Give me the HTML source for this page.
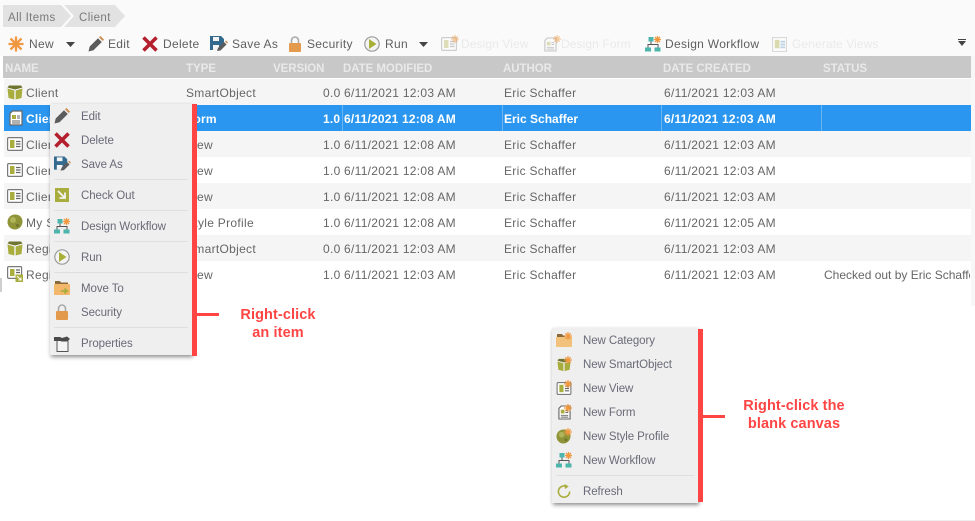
<!DOCTYPE html>
<html><head><meta charset="utf-8">
<style>
html,body{margin:0;padding:0}
body{width:975px;height:521px;overflow:hidden;position:relative;background:#fff;font-family:"Liberation Sans",sans-serif;font-size:12px;color:#666;letter-spacing:.3px}
.a{position:absolute}
.t{position:absolute;white-space:nowrap;line-height:16px;height:16px}
.tb{color:#5f5f5f;font-size:12px;margin-top:-1px}
.dis{color:#eaeaea;letter-spacing:.1px}
.h{color:#e9e9e9;font-weight:bold;font-size:11.5px;letter-spacing:-.05px;top:61px}
.row{position:absolute;left:4px;width:967px;height:26px}
.m{position:absolute;background:#efefef;box-shadow:1px 2px 4px rgba(0,0,0,.45)}
.mi{position:absolute;white-space:nowrap;line-height:16px;height:16px;color:#6a6a78;font-size:11.5px;letter-spacing:-.08px;margin-top:1px}
.ms{position:absolute;height:1px;background:#dfdfdf}
.red{position:absolute;background:#ff4444}
.lab{position:absolute;color:#ff4444;font-weight:bold;font-size:14.5px;letter-spacing:.1px;text-align:center;white-space:nowrap;line-height:18px}
.sel{color:#fff;font-weight:bold;letter-spacing:.2px}
svg.i{position:absolute;overflow:visible}
</style></head><body>
<svg width="0" height="0" style="position:absolute">
<defs>
<symbol id="star" viewBox="0 0 16 16"><path d="M8 .5v15M.5 8h15M2.500 2.500l11 11M13.500 2.500l-11 11" stroke="#f0973f" stroke-width="2.300" fill="none"/></symbol>
<symbol id="pen" viewBox="0 0 16 16"><path d="M.5 15.500l1.200-5L10 2.200l3.800 3.800-8.300 8.300z" fill="#5c5c5c"/><path d="M11 1.200l3.800 3.800 1.200-1.400L12.400 0z" fill="#c98a4a"/></symbol>
<symbol id="x" viewBox="0 0 16 16"><path d="M1.500 1.500l13 13M14.500 1.500l-13 13" stroke="#b5202e" stroke-width="3.600" fill="none"/></symbol>
<symbol id="save" viewBox="0 0 18 16"><path d="M0 0h11l3 3v5l-6 6H0z" fill="#356a8f"/><rect x="3" y="1" width="6" height="4" fill="#f4f4f4"/><rect x="3" y="9" width="6" height="5" fill="#f4f4f4"/><path d="M7 15l1-3 6-6 2.500 2.500-6 6z" fill="#5c5c5c"/><path d="M15 5.500l2 2 1-1-2-2z" fill="#c98a4a"/></symbol>
<symbol id="lock" viewBox="0 0 14 16"><path d="M3.500 7V4.500a3.500 3.500 0 017 0V7" stroke="#a9a9a9" stroke-width="1.600" fill="none"/><rect x="1" y="7" width="12" height="9" rx="1" fill="#e39a4c"/></symbol>
<symbol id="run" viewBox="0 0 16 16"><circle cx="8" cy="8" r="7.200" fill="#f4f4f4" stroke="#9b9b9b" stroke-width="1.200"/><path d="M5 3L12.500 8 5 13z" fill="#a9b03a"/></symbol>
<symbol id="flow" viewBox="0 0 16 16"><rect x="3.500" y="1" width="5" height="4.500" fill="#4db6ac"/><rect x="0" y="11.500" width="6" height="4" fill="#4db6ac"/><rect x="9.500" y="11.500" width="6" height="4" fill="#4db6ac"/><path d="M3 11.500V8.500h10v3M6 5.500v3" stroke="#555" stroke-width="1" fill="none"/><path d="M12.500 0v7M9 3.500h7M10 1l5 5M15 1l-5 5" stroke="#f0973f" stroke-width="1.300"/></symbol>
<symbol id="cube" viewBox="0 0 16 16"><path d="M2 1.500h12l1.500 2L8 5.500.5 3.500z" fill="#6f7430"/><path d="M.5 4.500l6.800 2V15.500L1.500 14z" fill="#a9ad3e"/><path d="M15.500 4.500l-6.800 2V15.500l5.800-1.500z" fill="#a9ad3e"/></symbol>
<symbol id="view" viewBox="0 0 16 14"><rect x=".6" y=".6" width="14.800" height="12.800" rx="1" fill="#fff" stroke="#7a7a7a" stroke-width="1.200"/><rect x="3" y="3" width="4.500" height="8" fill="#a9ad3e"/><path d="M9 4.500h4.500M9 7h4.500M9 9.500h4.500" stroke="#666" stroke-width="1.300"/></symbol>
<symbol id="form" viewBox="0 0 14 16"><path d="M3.500 1h9.500V15H1V3.500z" fill="#fff" stroke="#666" stroke-width="1.200"/><rect x="3" y="5" width="4" height="4" fill="#a9ad3e"/><path d="M8 6h3M8 8h3M3 11h8M3 13h8" stroke="#666" stroke-width="1"/></symbol>
<symbol id="ball" viewBox="0 0 16 16"><path d="M8 .5c4.500 0 7.500 3 7.500 7 0 4.500-3.500 8-7.500 8-4.500 0-7.500-3.500-7.500-7.500S3.500.5 8 .5z" fill="#8f9438"/><circle cx="6" cy="6" r="3" fill="#b0b45a"/><circle cx="10.500" cy="11.500" r="1.500" fill="#70742b"/></symbol>
<symbol id="check" viewBox="0 0 14 14"><rect width="14" height="14" fill="#a9ad3e"/><path d="M3 3l7 7M10 4.500V10H4.500" stroke="#f4f4f4" stroke-width="1.800" fill="none"/></symbol>
<symbol id="regview" viewBox="0 0 16 16"><rect x=".6" y=".6" width="14" height="11.800" rx="1" fill="#fff" stroke="#7a7a7a" stroke-width="1.200"/><rect x="3" y="3" width="4.500" height="7" fill="#a9ad3e"/><path d="M9 4h4M9 6.500h4" stroke="#666" stroke-width="1.200"/><rect x="8.500" y="8.500" width="7.500" height="7.500" fill="#a9ad3e"/><path d="M10 10l4 4M14 11.500V14h-2.500" stroke="#fff" stroke-width="1" fill="none"/></symbol>
<symbol id="move" viewBox="0 0 16 16"><path d="M1 1h5l1 1.500h7v2H1z" fill="#8a6a3a"/><path d="M0 4h16v10a1 1 0 01-1 1H1a1 1 0 01-1-1z" fill="#f2b76a"/><path d="M7 11h6M10.500 8.500L13 11l-2.500 2.500" stroke="#a9ad3e" stroke-width="1.700" fill="none"/></symbol>
<symbol id="prop" viewBox="0 0 16 16"><path d="M3 4.500V15.500H14V4.500" fill="#f4f4f4" stroke="#555" stroke-width="1"/><path d="M0 1h6l2 1 5-1.500 3 2.500-3 2.500H8L6 5H0z" fill="#4a4a4a"/></symbol>
<symbol id="folder" viewBox="0 0 16 16"><path d="M1 2h5l1 1.500H9v2H1z" fill="#8a6a3a"/><path d="M0 5h16v9a1 1 0 01-1 1H1a1 1 0 01-1-1z" fill="#f2c27c"/></symbol>
<symbol id="refresh" viewBox="0 0 16 16"><path d="M13.500 8a6 6 0 11-4-5.600" stroke="#a9ad3e" stroke-width="1.700" fill="none"/><path d="M8 0l4.500 2.500L8.500 5.500z" fill="#a9ad3e"/></symbol>
<symbol id="star2" viewBox="0 0 8 8"><path d="M4 0v8M0 4h8M1.300 1.300l5.400 5.400M6.700 1.300L1.300 6.700" stroke="#f0973f" stroke-width="1.300"/></symbol>
<symbol id="gen" viewBox="0 0 16 16"><rect x=".6" y=".6" width="14.800" height="14.800" fill="#fff" stroke="#aaa" stroke-width="1.200"/><rect x="3" y="3" width="5" height="9" fill="#a9ad3e"/><path d="M9 5h5M9 8h5M9 11h5" stroke="#6a9ac0" stroke-width="2"/></symbol>
</defs></svg>

<div class="a" style="left:0;top:0;width:975px;height:56px;background:#fafafa"></div>
<div class="a" style="left:971px;top:56px;width:4px;height:250px;background:#f7f7f7"></div>

<!-- breadcrumb -->
<svg class="i" style="left:0;top:0" width="140" height="30"><path d="M3 5h58l10 11-10 11H3z" fill="#e2e2e2"/><path d="M64 5h51l10 11-10 11H64l10-11z" fill="#e2e2e2"/></svg>
<div class="t" style="left:8px;top:10px;color:#7a7a7a;font-size:11.500px;letter-spacing:.4px">All Items</div>
<div class="t" style="left:79px;top:10px;color:#7a7a7a;font-size:11.500px;letter-spacing:.4px">Client</div>

<!-- toolbar -->
<svg class="i" style="left:8px;top:36px" width="16" height="16"><use href="#star"/></svg>
<div class="t tb" style="left:29px;top:37px">New</div>
<svg class="i" style="left:66px;top:42px" width="9" height="5"><path d="M0 0h9L4.500 5z" fill="#444"/></svg>
<svg class="i" style="left:88px;top:36px" width="16" height="16"><use href="#pen"/></svg>
<div class="t tb" style="left:108px;top:37px">Edit</div>
<svg class="i" style="left:142px;top:36px" width="16" height="16"><use href="#x"/></svg>
<div class="t tb" style="left:163px;top:37px">Delete</div>
<svg class="i" style="left:210px;top:36px" width="18" height="16"><use href="#save"/></svg>
<div class="t tb" style="left:232px;top:37px">Save As</div>
<svg class="i" style="left:288px;top:36px" width="14" height="16"><use href="#lock"/></svg>
<div class="t tb" style="left:307px;top:37px">Security</div>
<svg class="i" style="left:364px;top:36px" width="16" height="16"><use href="#run"/></svg>
<div class="t tb" style="left:385px;top:37px">Run</div>
<svg class="i" style="left:419px;top:42px" width="9" height="5"><path d="M0 0h9L4.500 5z" fill="#444"/></svg>
<svg class="i" style="left:441px;top:37px;opacity:.35" width="16" height="14"><use href="#view"/></svg>
<svg class="i" style="left:451px;top:35px;opacity:.5" width="8" height="8"><use href="#star2"/></svg>
<div class="t tb dis" style="left:461px;top:37px">Design View</div>
<svg class="i" style="left:544px;top:37px;opacity:.35" width="13" height="15"><use href="#form"/></svg>
<svg class="i" style="left:553px;top:35px;opacity:.5" width="8" height="8"><use href="#star2"/></svg>
<div class="t tb dis" style="left:561px;top:37px">Design Form</div>
<svg class="i" style="left:645px;top:36px" width="16" height="16"><use href="#flow"/></svg>
<div class="t tb" style="left:665px;top:37px">Design Workflow</div>
<svg class="i" style="left:772px;top:37px;opacity:.4" width="15" height="15"><use href="#gen"/></svg>
<div class="t tb dis" style="left:792px;top:37px">Generate Views</div>
<svg class="i" style="left:958px;top:39px" width="8" height="7"><path d="M0 0h8v1H0zM0 2h8L4 7z" fill="#444"/></svg>

<!-- header -->
<div class="a" style="left:3px;top:56px;width:968px;height:22px;background:#c8c8c8"></div>
<div class="t h" style="left:5px">NAME</div>
<div class="t h" style="left:186px">TYPE</div>
<div class="t h" style="left:273px">VERSION</div>
<div class="t h" style="left:343px">DATE MODIFIED</div>
<div class="t h" style="left:503px">AUTHOR</div>
<div class="t h" style="left:663px">DATE CREATED</div>
<div class="t h" style="left:823px">STATUS</div>

<!-- rows -->
<div class="row" style="top:79px;background:#f5f5f5"></div>
<div class="row" style="top:105px;background:#2a96f0"></div>
<div class="row" style="top:131px;background:#f5f5f5"></div>
<div class="row" style="top:183px;background:#f5f5f5"></div>
<div class="row" style="top:235px;background:#f5f5f5"></div>
<div class="a" style="left:342px;top:105px;width:1px;height:26px;background:#6ab6f5"></div>
<div class="a" style="left:502px;top:105px;width:1px;height:26px;background:#6ab6f5"></div>
<div class="a" style="left:661px;top:105px;width:1px;height:26px;background:#6ab6f5"></div>
<div class="a" style="left:821px;top:105px;width:1px;height:26px;background:#6ab6f5"></div>

<svg class="i" style="left:7px;top:84px" width="16" height="16"><use href="#cube"/></svg>
<svg class="i" style="left:9px;top:110px" width="14" height="16"><use href="#form"/></svg>
<svg class="i" style="left:7px;top:137px" width="16" height="14"><use href="#view"/></svg>
<svg class="i" style="left:7px;top:163px" width="16" height="14"><use href="#view"/></svg>
<svg class="i" style="left:7px;top:189px" width="16" height="14"><use href="#view"/></svg>
<svg class="i" style="left:7px;top:214px" width="16" height="16"><use href="#ball"/></svg>
<svg class="i" style="left:7px;top:240px" width="16" height="16"><use href="#cube"/></svg>
<svg class="i" style="left:7px;top:266px" width="16" height="16"><use href="#regview"/></svg>

<div class="a" style="left:0;top:1px;width:975px;height:300px">
<div class="t" style="left:26px;top:84px">Client</div>
<div class="t sel" style="left:26px;top:110px">Client</div>
<div class="t" style="left:26px;top:136px">Client</div>
<div class="t" style="left:26px;top:162px">Client</div>
<div class="t" style="left:26px;top:188px">Client</div>
<div class="t" style="left:26px;top:214px">My Style</div>
<div class="t" style="left:26px;top:240px">Regi</div>
<div class="t" style="left:26px;top:266px">Regi</div>

<div class="t" style="left:186px;top:84px">SmartObject</div>
<div class="t sel" style="left:186px;top:110px">Form</div>
<div class="t" style="left:186px;top:136px">View</div>
<div class="t" style="left:186px;top:162px">View</div>
<div class="t" style="left:186px;top:188px">View</div>
<div class="t" style="left:186px;top:214px">Style Profile</div>
<div class="t" style="left:186px;top:240px">SmartObject</div>
<div class="t" style="left:186px;top:266px">View</div>

<div class="t" style="left:323px;top:84px">0.0</div>
<div class="t sel" style="left:323px;top:110px">1.0</div>
<div class="t" style="left:323px;top:136px">1.0</div>
<div class="t" style="left:323px;top:162px">1.0</div>
<div class="t" style="left:323px;top:188px">1.0</div>
<div class="t" style="left:323px;top:214px">1.0</div>
<div class="t" style="left:323px;top:240px">0.0</div>
<div class="t" style="left:323px;top:266px">1.0</div>

<div class="t" style="left:344px;top:84px">6/11/2021 12:03 AM</div>
<div class="t sel" style="left:344px;top:110px">6/11/2021 12:08 AM</div>
<div class="t" style="left:344px;top:136px">6/11/2021 12:08 AM</div>
<div class="t" style="left:344px;top:162px">6/11/2021 12:08 AM</div>
<div class="t" style="left:344px;top:188px">6/11/2021 12:08 AM</div>
<div class="t" style="left:344px;top:214px">6/11/2021 12:08 AM</div>
<div class="t" style="left:344px;top:240px">6/11/2021 12:03 AM</div>
<div class="t" style="left:344px;top:266px">6/11/2021 12:03 AM</div>

<div class="t" style="left:504px;top:84px">Eric Schaffer</div>
<div class="t sel" style="left:504px;top:110px;letter-spacing:0">Eric Schaffer</div>
<div class="t" style="left:504px;top:136px">Eric Schaffer</div>
<div class="t" style="left:504px;top:162px">Eric Schaffer</div>
<div class="t" style="left:504px;top:188px">Eric Schaffer</div>
<div class="t" style="left:504px;top:214px">Eric Schaffer</div>
<div class="t" style="left:504px;top:240px">Eric Schaffer</div>
<div class="t" style="left:504px;top:266px">Eric Schaffer</div>

<div class="t" style="left:664px;top:84px">6/11/2021 12:03 AM</div>
<div class="t sel" style="left:664px;top:110px">6/11/2021 12:03 AM</div>
<div class="t" style="left:664px;top:136px">6/11/2021 12:03 AM</div>
<div class="t" style="left:664px;top:162px">6/11/2021 12:03 AM</div>
<div class="t" style="left:664px;top:188px">6/11/2021 12:03 AM</div>
<div class="t" style="left:664px;top:214px">6/11/2021 12:05 AM</div>
<div class="t" style="left:664px;top:240px">6/11/2021 12:03 AM</div>
<div class="t" style="left:664px;top:266px">6/11/2021 12:03 AM</div>

<div class="a" style="left:824px;top:266px;width:146px;height:16px;overflow:hidden"><div class="t" style="left:0;top:0;letter-spacing:0">Checked out by Eric Schaffer</div></div>
</div>

<!-- context menu 1 -->
<div class="m" style="left:50px;top:104px;width:142px;height:251px"></div>
<div class="red" style="left:192px;top:104px;width:5px;height:252px"></div>
<div class="red" style="left:197px;top:313px;width:22px;height:3px"></div>
<div class="lab" style="left:218px;top:306px;width:120px">Right-click</div>
<div class="lab" style="left:218px;top:324px;width:120px">an item</div>

<svg class="i" style="left:54px;top:108px" width="16" height="16"><use href="#pen"/></svg>
<svg class="i" style="left:54px;top:132px" width="16" height="16"><use href="#x"/></svg>
<svg class="i" style="left:54px;top:156px" width="17" height="16"><use href="#save"/></svg>
<svg class="i" style="left:55px;top:188px" width="14" height="14"><use href="#check"/></svg>
<svg class="i" style="left:54px;top:218px" width="16" height="16"><use href="#flow"/></svg>
<svg class="i" style="left:54px;top:249px" width="16" height="16"><use href="#run"/></svg>
<svg class="i" style="left:54px;top:280px" width="16" height="16"><use href="#move"/></svg>
<svg class="i" style="left:55px;top:304px" width="14" height="16"><use href="#lock"/></svg>
<svg class="i" style="left:54px;top:336px" width="16" height="16"><use href="#prop"/></svg>

<div class="mi" style="left:81px;top:108px">Edit</div>
<div class="mi" style="left:81px;top:132px">Delete</div>
<div class="mi" style="left:81px;top:156px">Save As</div>
<div class="ms" style="left:54px;top:179px;width:134px"></div>
<div class="mi" style="left:81px;top:187px">Check Out</div>
<div class="ms" style="left:54px;top:210px;width:134px"></div>
<div class="mi" style="left:81px;top:218px">Design Workflow</div>
<div class="ms" style="left:54px;top:241px;width:134px"></div>
<div class="mi" style="left:81px;top:249px">Run</div>
<div class="ms" style="left:54px;top:272px;width:134px"></div>
<div class="mi" style="left:81px;top:280px">Move To</div>
<div class="mi" style="left:81px;top:304px">Security</div>
<div class="ms" style="left:54px;top:327px;width:134px"></div>
<div class="mi" style="left:81px;top:335px">Properties</div>

<!-- context menu 2 -->
<div class="m" style="left:552px;top:328px;width:146px;height:175px"></div>
<div class="red" style="left:698px;top:329px;width:5px;height:173px"></div>
<div class="red" style="left:703px;top:415px;width:22px;height:3px"></div>
<div class="lab" style="left:734px;top:397px;width:120px">Right-click the</div>
<div class="lab" style="left:734px;top:415px;width:120px">blank canvas</div>

<svg class="i" style="left:556px;top:332px" width="16" height="16"><use href="#folder"/></svg>
<svg class="i" style="left:564px;top:332px" width="8" height="8"><use href="#star2"/></svg>
<svg class="i" style="left:557px;top:357px" width="14" height="15"><use href="#cube"/></svg>
<svg class="i" style="left:564px;top:356px" width="8" height="8"><use href="#star2"/></svg>
<svg class="i" style="left:556px;top:382px" width="16" height="13"><use href="#view"/></svg>
<svg class="i" style="left:564px;top:380px" width="8" height="8"><use href="#star2"/></svg>
<svg class="i" style="left:558px;top:405px" width="13" height="15"><use href="#form"/></svg>
<svg class="i" style="left:564px;top:404px" width="8" height="8"><use href="#star2"/></svg>
<svg class="i" style="left:556px;top:429px" width="15" height="15"><use href="#ball"/></svg>
<svg class="i" style="left:564px;top:428px" width="8" height="8"><use href="#star2"/></svg>
<svg class="i" style="left:556px;top:452px" width="16" height="16"><use href="#flow"/></svg>
<svg class="i" style="left:557px;top:484px" width="15" height="15"><use href="#refresh"/></svg>

<div class="mi" style="left:583px;top:332px">New Category</div>
<div class="mi" style="left:583px;top:356px">New SmartObject</div>
<div class="mi" style="left:583px;top:380px">New View</div>
<div class="mi" style="left:583px;top:404px">New Form</div>
<div class="mi" style="left:583px;top:428px">New Style Profile</div>
<div class="mi" style="left:583px;top:452px">New Workflow</div>
<div class="ms" style="left:556px;top:475px;width:138px"></div>
<div class="mi" style="left:583px;top:483px">Refresh</div>

<div class="a" style="left:0;top:278px;width:2px;height:14px;background:#cfcfcf"></div>
<div class="a" style="left:720px;top:520px;width:255px;height:1px;background:#eee"></div>
</body></html>
